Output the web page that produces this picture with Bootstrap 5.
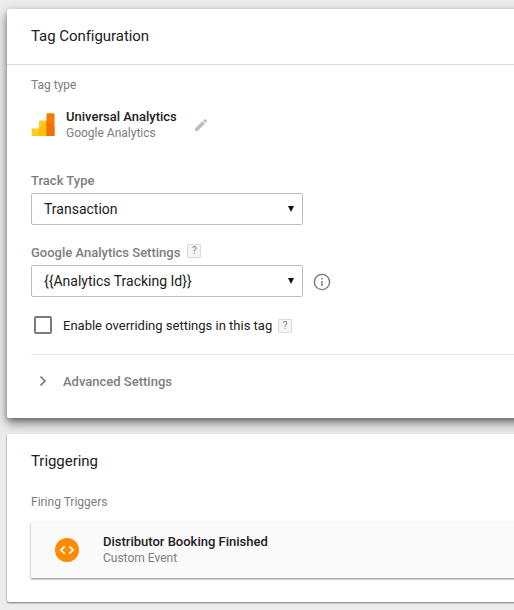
<!DOCTYPE html>
<html lang="en">
<head>
<meta charset="utf-8">
<meta name="viewport" content="width=device-width, initial-scale=1">
<title>Tag Configuration</title>
<link rel="stylesheet" href="https://cdn.jsdelivr.net/npm/bootstrap@5.3.0/dist/css/bootstrap.min.css">
<style>
body{background:#ececec;font-family:Roboto,"Liberation Sans",sans-serif;font-size:12px;line-height:16px;color:#212121;height:610px;padding:9px 0 0 7px}
.panel{border:0;border-radius:2px;margin-right:-12px;background:#fff}
.panel-main{height:409px;margin-bottom:16px;box-shadow:0 5px 11px rgba(0,0,0,.5),0 2px 4px rgba(0,0,0,.18)}
.panel-trigger{height:168px;box-shadow:0 1px 2px rgba(0,0,0,.5)}
.panel-head{height:56px;border-bottom:1px solid #dcdcdc;padding:0 24px 2px}
.panel-title{font-size:15px;line-height:20px;font-weight:400;letter-spacing:-.05px;margin:0}
.inner{padding:12px 0 0 24px}
.muted{color:#7d7d7d}
.name{font-size:13px;font-weight:500;white-space:nowrap}
.field-label{font-size:13px;font-weight:500;color:#7d7d7d}
.picker{width:272px;height:32px;border:1px solid #bdbdbd;border-radius:2px;background:#fff;padding:0 7px 0 12px;font-size:14px;color:#212121}
.help{width:14px;height:14px;border:1px solid #dcdcdc;background:#f5f5f5;color:#858585;font-size:10px;line-height:12px;text-align:center;border-radius:1px;font-weight:400}
.box{width:18px;height:18px;border:2px solid #7c7c7c;border-radius:2px;margin-left:3px}
.type-row{margin-top:16px}
.type-text{margin-left:11px}
.track{margin-top:32px}
.settings{margin-top:20px}
.settings-label{height:15px}
.settings-label .help{margin:-1px 0 0 7px}
.override{margin-top:18px;height:20px;font-size:13px}
.rule{height:1px;background:#e8e8e8;margin-top:19px}
.advanced{margin-top:19px}
.trigger-item{height:56px;margin-top:12px;background:#fafafa;box-shadow:0 1px 2px rgba(0,0,0,.5);padding-left:24px}
.pt-px{padding-top:1px}
.info{margin:2px 0 0 10px}
.over-text{margin:2px 0 0 11px}
.over-help{margin:2px 0 0 6px}
.chev{margin:-2px 0 0 8px}
.adv-text{margin-left:16px}
.trig-inner{padding-top:17px}
.firing{margin-top:23px}
svg{display:block;flex:none}
</style>
<script src="https://cdn.jsdelivr.net/npm/bootstrap@5.3.0/dist/js/bootstrap.bundle.min.js"></script>
</head>
<body class="overflow-hidden">
<section class="card panel panel-main">
  <header class="panel-head d-flex align-items-center"><h1 class="panel-title">Tag Configuration</h1></header>
  <div class="inner">
    <div class="muted">Tag type</div>
    <div class="type-row d-flex align-items-center">
      <svg width="24" height="24" viewBox="0 0 24 24">
        <path d="M1.600 15.500H8V9Q8 7.600 9.400 7.600H16V23H1.600Q.6 23 .6 22V16.500Q.6 15.500 1.600 15.500Z" fill="#ffca28"/>
        <path d="M8 15.500 16 7.600V23H8Z" fill="#ffc107"/>
        <path d="M16 .2H22.300Q23.500 .2 23.500 1.400V21.800Q23.500 23 22.300 23H15.500V.8Q15.500 .2 16 .2Z" fill="#f57c00"/>
        <path d="M15.500 8 23.500 14V21.800Q23.500 23 22.300 23H15.500Z" fill="#ee7007"/>
      </svg>
      <div class="type-text">
        <div class="name">Universal Analytics</div>
        <div class="muted">Google Analytics</div>
      </div>
      <svg class="ms-3" width="16" height="16" viewBox="0 0 24 24" fill="#bdbdbd"><path d="M3 17.250V21h3.750L17.810 9.940l-3.750-3.750L3 17.250zM20.710 7.040a1 1 0 0 0 0-1.410l-2.340-2.340a1 1 0 0 0-1.410 0l-1.830 1.830 3.750 3.750 1.830-1.830z"/></svg>
    </div>
    <div class="track">
      <div class="field-label">Track Type</div>
      <div class="picker d-flex align-items-center justify-content-between mt-1"><span>Transaction</span>
        <svg width="8" height="8" viewBox="0 0 8 8"><path d="M1 1H7L4 7Z" fill="#111"/></svg></div>
    </div>
    <div class="settings">
      <div class="field-label settings-label d-flex"><span>Google Analytics Settings</span><span class="help">?</span></div>
      <div class="d-flex align-items-center mt-1 pt-px">
        <div class="picker d-flex align-items-center justify-content-between"><span>{{Analytics Tracking Id}}</span>
          <svg width="8" height="8" viewBox="0 0 8 8"><path d="M1 1H7L4 7Z" fill="#111"/></svg></div>
        <svg class="info" width="18" height="18" viewBox="0 0 18 18"><circle cx="9" cy="9" r="7.600" fill="none" stroke="#757575" stroke-width="1.400"/><path d="M8.300 5H9.700V6.500H8.300ZM8.300 8H9.700V13H8.300Z" fill="#757575"/></svg>
      </div>
    </div>
    <div class="override d-flex align-items-center"><span class="box"></span><span class="over-text">Enable overriding settings in this tag</span><span class="help over-help">?</span></div>
    <div class="rule"></div>
    <div class="advanced d-flex align-items-center field-label">
      <svg class="chev" width="8" height="12" viewBox="0 0 8 12"><path d="M1.500 1.500 6 6 1.500 10.500" fill="none" stroke="#757575" stroke-width="1.600"/></svg>
      <span class="adv-text">Advanced Settings</span>
    </div>
  </div>
</section>
<section class="card panel panel-trigger">
  <div class="inner trig-inner">
    <h2 class="panel-title">Triggering</h2>
    <div class="muted firing">Firing Triggers</div>
    <div class="trigger-item d-flex align-items-center">
      <svg width="24" height="24" viewBox="0 0 24 24"><circle cx="12" cy="12" r="12" fill="#fb8c00"/><path d="M9.700 8.400 6 12l3.700 3.600M14.300 8.400 18 12l-3.700 3.600" fill="none" stroke="#fff" stroke-width="1.700"/></svg>
      <div class="ms-4">
        <div class="name">Distributor Booking Finished</div>
        <div class="muted">Custom Event</div>
      </div>
    </div>
  </div>
</section>
</body>
</html>
